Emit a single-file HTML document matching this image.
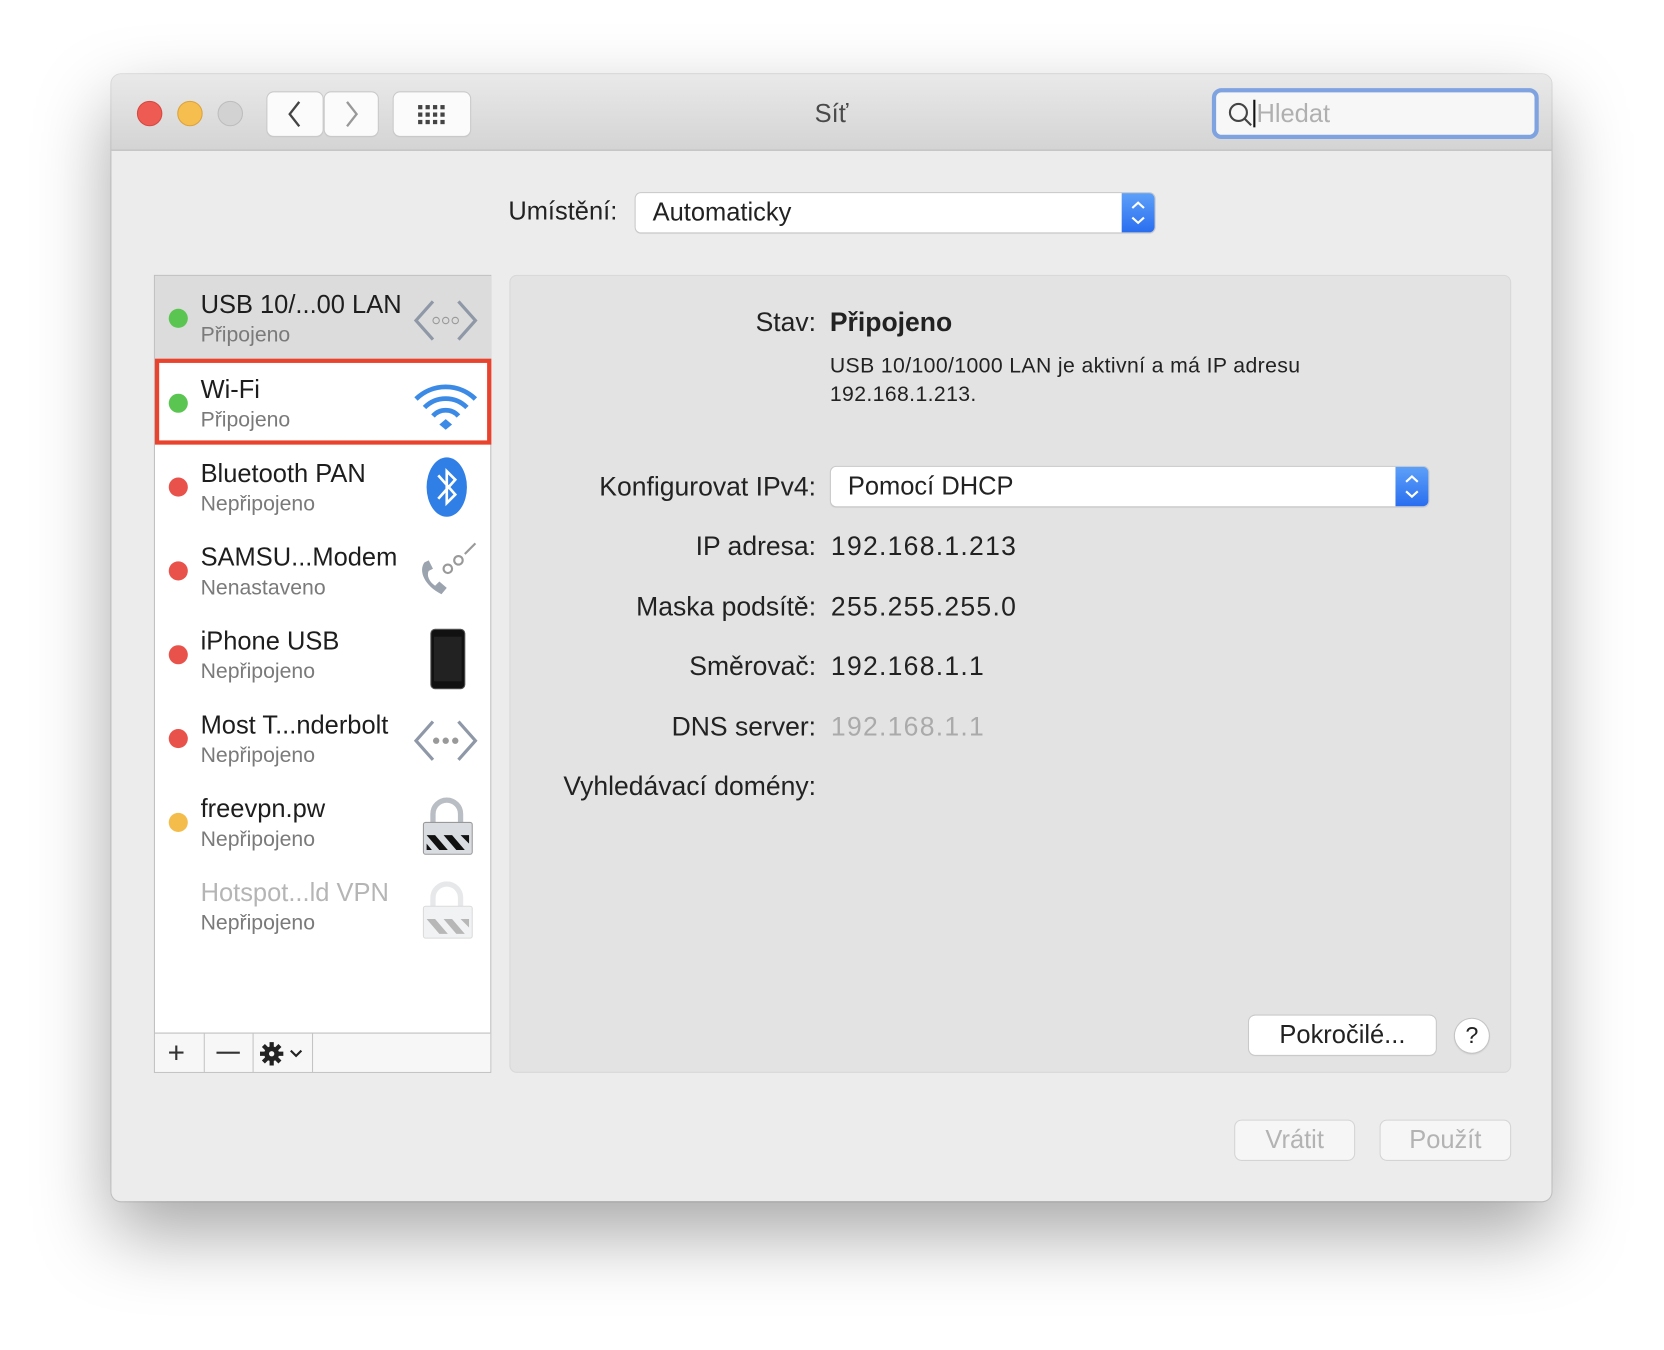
<!DOCTYPE html>
<html><head><meta charset="utf-8"><style>
*{box-sizing:border-box;margin:0;padding:0}
html,body{width:1664px;height:1350px;background:#fff;overflow:hidden;font-family:"Liberation Sans","DejaVu Sans",sans-serif;color:#222}
#s{position:absolute;left:0;top:0;width:1568px;height:1272px;transform:scale(1.0612);transform-origin:0 0}
.a{position:absolute}
.win{left:105px;top:70px;width:1357px;height:1062px;border-radius:9px;background:#ececec;box-shadow:0 30px 70px rgba(0,0,0,.35),0 0 0 1px rgba(0,0,0,.12);overflow:hidden}
.tb{left:0;top:0;width:1357px;height:72px;background:linear-gradient(#e9e9e9,#d4d4d4);border-bottom:1px solid #b5b5b5}
.tl{width:24px;height:24px;border-radius:50%;top:25px}
.btn{background:#fbfbfb;border-radius:6px;box-shadow:0 0 0 1px #c9c9c9,0 1px 1px rgba(0,0,0,.1)}
.lbl{font-size:25px;text-align:right;width:400px;left:369px}
.val{font-size:25px;left:783px;letter-spacing:1.2px}
.row{left:0;width:317px;height:79px}
.t1{position:absolute;left:43px;top:14px;font-size:24px;color:#1d1d1d}
.t2{position:absolute;left:43px;top:45px;font-size:20px;color:#7a7a7a}
.dot{position:absolute;left:13px;top:31px;width:18px;height:18px;border-radius:50%}
.ic{position:absolute;left:240px;top:10px}
</style></head><body><div id="s">
<div class="a win">
 <div class="a tb">
  <div class="a tl" style="left:24px;background:#ee5b53;border:1px solid #d64840"></div>
  <div class="a tl" style="left:62px;background:#f6be4f;border:1px solid #dba33b"></div>
  <div class="a tl" style="left:100px;background:#d2d2d2;border:1px solid #bdbdbd"></div>
  <div class="a btn" style="left:147px;top:17px;width:52px;height:41px"><svg width="52" height="41"><path d="M30 9 L21 20.5 L30 32" fill="none" stroke="#444" stroke-width="2.2"/></svg></div>
  <div class="a btn" style="left:201px;top:17px;width:50px;height:41px"><svg width="50" height="41"><path d="M21 9 L30 20.5 L21 32" fill="none" stroke="#999" stroke-width="2.2"/></svg></div>
  <div class="a btn" style="left:266px;top:17px;width:72px;height:41px"><svg width="72" height="41"><g fill="#444"><rect x="23" y="12" width="4" height="4"/><rect x="30" y="12" width="4" height="4"/><rect x="37" y="12" width="4" height="4"/><rect x="44" y="12" width="4" height="4"/><rect x="23" y="19" width="4" height="4"/><rect x="30" y="19" width="4" height="4"/><rect x="37" y="19" width="4" height="4"/><rect x="44" y="19" width="4" height="4"/><rect x="23" y="26" width="4" height="4"/><rect x="30" y="26" width="4" height="4"/><rect x="37" y="26" width="4" height="4"/><rect x="44" y="26" width="4" height="4"/></g></svg></div>
  <div class="a" style="left:0;width:1357px;top:24px;text-align:center;font-size:24px;color:#4a4a4a">Síť</div>
  <div class="a" style="left:1037px;top:13px;width:308px;height:48px;border:4px solid #7fa3e0;border-radius:9px;background:#f7f7f7">
   <svg class="a" style="left:10px;top:8px" width="26" height="26"><circle cx="11" cy="11" r="8" fill="none" stroke="#444" stroke-width="2"/><path d="M17 17 L23 23" stroke="#444" stroke-width="2"/></svg>
   <div class="a" style="left:35px;top:7px;width:2px;height:26px;background:#111"></div>
   <div class="a" style="left:38px;top:7px;font-size:24px;color:#b0b0b0">Hledat</div>
  </div>
 </div>
 <div class="a" style="left:374px;top:116px;font-size:24px;color:#222">Umístění:</div>
 <div class="a" style="left:494px;top:112px;width:489px;height:37px;background:#fff;border-radius:5px;box-shadow:0 0 0 1px #c8c8c8,0 1px 1px rgba(0,0,0,.15)">
  <div class="a" style="left:16px;top:5px;font-size:24px">Automaticky</div>
  <div class="a" style="right:0;top:0;width:31px;height:37px;background:linear-gradient(#5da0f8,#2a6ef0);border-radius:0 5px 5px 0"><svg width="31" height="37"><path d="M10 14 L15.5 9 L21 14 M10 23 L15.5 28 L21 23" fill="none" stroke="#fff" stroke-width="2"/></svg></div>
 </div>
 <!-- list -->
 <div class="a" style="left:40px;top:189px;width:318px;height:752px;background:#fff;border:1px solid #bdbdbd">
  <div class="a row" style="top:0;background:#dcdcdc;border-bottom:1px solid #cfcfcf"><div class="dot" style="background:#5bc552"></div><div class="t1">USB 10/...00 LAN</div><div class="t2">Připojeno</div>
   <svg class="ic" width="70" height="60"><path d="M22 14 L6 32 L22 50 M46 14 L62 32 L46 50" fill="none" stroke="#8f98a6" stroke-width="3"/><circle cx="25" cy="32" r="3" fill="none" stroke="#999"/><circle cx="34" cy="32" r="3" fill="none" stroke="#999"/><circle cx="43" cy="32" r="3" fill="none" stroke="#999"/></svg></div>
  <div class="a row" style="top:78px;height:81px;border:4px solid #e9432d"><div class="dot" style="left:9px;top:29px;background:#5bc552"></div><div class="t1" style="left:39px;top:12px">Wi-Fi</div><div class="t2" style="left:39px;top:43px">Připojeno</div>
   <svg class="ic" style="left:236px;top:8px" width="70" height="60"><g fill="none" stroke="#3b8ae6" stroke-width="4.5" stroke-linecap="butt"><path d="M6 26 A40 40 0 0 1 62 26"/><path d="M14 34 A28 28 0 0 1 54 34"/><path d="M22 42 A16 16 0 0 1 46 42"/></g><path d="M28 50 L34 45 L40 50 L34 55Z" fill="#3b8ae6"/></svg></div>
  <div class="a row" style="top:159px"><div class="dot" style="background:#e8524a"></div><div class="t1">Bluetooth PAN</div><div class="t2">Nepřipojeno</div>
   <svg class="ic" width="70" height="60"><ellipse cx="35" cy="30" rx="19" ry="28" fill="#2f7fe6"/><path d="M27 19 L43 37 L35 45 L35 15 L43 23 L27 41" fill="none" stroke="#fff" stroke-width="2.5"/></svg></div>
  <div class="a row" style="top:238px"><div class="dot" style="background:#e8524a"></div><div class="t1">SAMSU...Modem</div><div class="t2">Nenastaveno</div>
   <svg class="ic" width="70" height="60"><path d="M14 22 C8 30 14 44 30 52 L35 46 L28 40 L24 44 C18 40 16 34 18 30 L22 28 L18 20Z" fill="#9aa3ae"/><circle cx="36" cy="28" r="4" fill="none" stroke="#999" stroke-width="2"/><circle cx="46" cy="20" r="4" fill="none" stroke="#999" stroke-width="2"/><path d="M52 14 L62 4" stroke="#999" stroke-width="2"/></svg></div>
  <div class="a row" style="top:317px"><div class="dot" style="background:#e8524a"></div><div class="t1">iPhone USB</div><div class="t2">Nepřipojeno</div>
   <svg class="ic" width="70" height="64"><rect x="20" y="6" width="32" height="56" rx="4" fill="#111" stroke="#555"/><rect x="23" y="13" width="26" height="42" fill="#222"/></svg></div>
  <div class="a row" style="top:396px"><div class="dot" style="background:#e8524a"></div><div class="t1">Most T...nderbolt</div><div class="t2">Nepřipojeno</div>
   <svg class="ic" width="70" height="60"><path d="M22 14 L6 32 L22 50 M46 14 L62 32 L46 50" fill="none" stroke="#8f98a6" stroke-width="3"/><circle cx="25" cy="32" r="3" fill="#999"/><circle cx="34" cy="32" r="3" fill="#999"/><circle cx="43" cy="32" r="3" fill="#999"/></svg></div>
  <div class="a row" style="top:475px"><div class="dot" style="background:#f4bd4b"></div><div class="t1">freevpn.pw</div><div class="t2">Nepřipojeno</div>
   <svg class="ic" width="70" height="64"><path d="M22 30 V22 A13 13 0 0 1 48 22 V30" fill="none" stroke="#b9bec5" stroke-width="5"/><rect x="13" y="30" width="46" height="30" rx="2" fill="#d9dce0" stroke="#999"/><path d="M16 42 L24 42 L36 56 L28 56Z M32 42 L40 42 L52 56 L44 56Z M48 42 L56 42 L56 50Z M16 50 L21 56 L16 56Z" fill="#111"/></svg></div>
  <div class="a row" style="top:554px"><div class="t1" style="color:#b5b5b5">Hotspot...ld VPN</div><div class="t2">Nepřipojeno</div>
   <svg class="ic" width="70" height="64" opacity="0.35"><path d="M22 30 V22 A13 13 0 0 1 48 22 V30" fill="none" stroke="#b9bec5" stroke-width="5"/><rect x="13" y="30" width="46" height="30" rx="2" fill="#d9dce0" stroke="#999"/><path d="M16 42 L24 42 L36 56 L28 56Z M32 42 L40 42 L52 56 L44 56Z M48 42 L56 42 L56 50Z" fill="#333"/></svg></div>
  <div class="a" style="left:0;top:713px;width:316px;height:37px;border-top:1px solid #bdbdbd;background:#f7f7f7">
   <div class="a" style="left:46px;top:0;width:1px;height:37px;background:#c4c4c4"></div>
   <div class="a" style="left:92px;top:0;width:1px;height:37px;background:#c4c4c4"></div>
   <div class="a" style="left:148px;top:0;width:1px;height:37px;background:#c4c4c4"></div>
   <div class="a" style="left:12px;top:2px;font-size:28px;color:#333">+</div>
   <div class="a" style="left:58px;top:17px;width:22px;height:2px;background:#333"></div>
   <svg class="a" style="left:98px;top:7px" width="24" height="24"><g fill="#222"><circle cx="12" cy="12" r="7"/><g stroke="#222" stroke-width="4"><path d="M12 1V23M1 12H23M4.2 4.2L19.8 19.8M19.8 4.2L4.2 19.8"/></g></g><circle cx="12" cy="12" r="2.5" fill="#f7f7f7"/></svg>
   <svg class="a" style="left:126px;top:14px" width="14" height="10"><path d="M2 2 L7 7 L12 2" fill="none" stroke="#222" stroke-width="2"/></svg>
  </div>
 </div>
 <!-- right panel -->
 <div class="a" style="left:375px;top:189px;width:944px;height:752px;background:#e3e3e3;border:1px solid #d8d8d8;border-radius:7px"></div>
 <div class="a lbl" style="left:264px;top:220px">Stav:</div>
 <div class="a" style="left:677px;top:220px;font-size:25px;font-weight:bold">Připojeno</div>
 <div class="a" style="left:677px;top:262px;font-size:20px;line-height:27px;color:#222;letter-spacing:0.35px">USB 10/100/1000 LAN je aktivní a má IP adresu<br>192.168.1.213.</div>
 <div class="a lbl" style="left:264px;top:375px">Konfigurovat IPv4:</div>
 <div class="a" style="left:678px;top:370px;width:563px;height:37px;background:#fff;border-radius:5px;box-shadow:0 0 0 1px #c8c8c8,0 1px 1px rgba(0,0,0,.15)">
  <div class="a" style="left:16px;top:5px;font-size:24px">Pomocí DHCP</div>
  <div class="a" style="right:0;top:0;width:31px;height:37px;background:linear-gradient(#5da0f8,#2a6ef0);border-radius:0 5px 5px 0"><svg width="31" height="37"><path d="M10 14 L15.5 9 L21 14 M10 23 L15.5 28 L21 23" fill="none" stroke="#fff" stroke-width="2"/></svg></div>
 </div>
 <div class="a lbl" style="left:264px;top:431px">IP adresa:</div><div class="a val" style="left:678px;top:431px">192.168.1.213</div>
 <div class="a lbl" style="left:264px;top:488px">Maska podsítě:</div><div class="a val" style="left:678px;top:488px">255.255.255.0</div>
 <div class="a lbl" style="left:264px;top:544px">Směrovač:</div><div class="a val" style="left:678px;top:544px">192.168.1.1</div>
 <div class="a lbl" style="left:264px;top:601px">DNS server:</div><div class="a val" style="left:678px;top:601px;color:#aaa">192.168.1.1</div>
 <div class="a lbl" style="left:264px;top:657px">Vyhledávací domény:</div>
 <div class="a btn" style="left:1072px;top:887px;width:176px;height:37px;background:#fff;font-size:24px;text-align:center;line-height:37px">Pokročilé...</div>
 <div class="a" style="left:1266px;top:890px;width:32px;height:32px;border-radius:50%;background:#fff;box-shadow:0 0 0 1px #c4c4c4,0 1px 2px rgba(0,0,0,.2);text-align:center;font-size:22px;line-height:32px">?</div>
 <div class="a btn" style="left:1059px;top:986px;width:112px;height:37px;background:#f6f6f6;box-shadow:0 0 0 1px #d4d4d4;font-size:24px;text-align:center;line-height:37px;color:#b3b3b3">Vrátit</div>
 <div class="a btn" style="left:1196px;top:986px;width:122px;height:37px;background:#f6f6f6;box-shadow:0 0 0 1px #d4d4d4;font-size:24px;text-align:center;line-height:37px;color:#b3b3b3">Použít</div>
</div>
</div></body></html>
